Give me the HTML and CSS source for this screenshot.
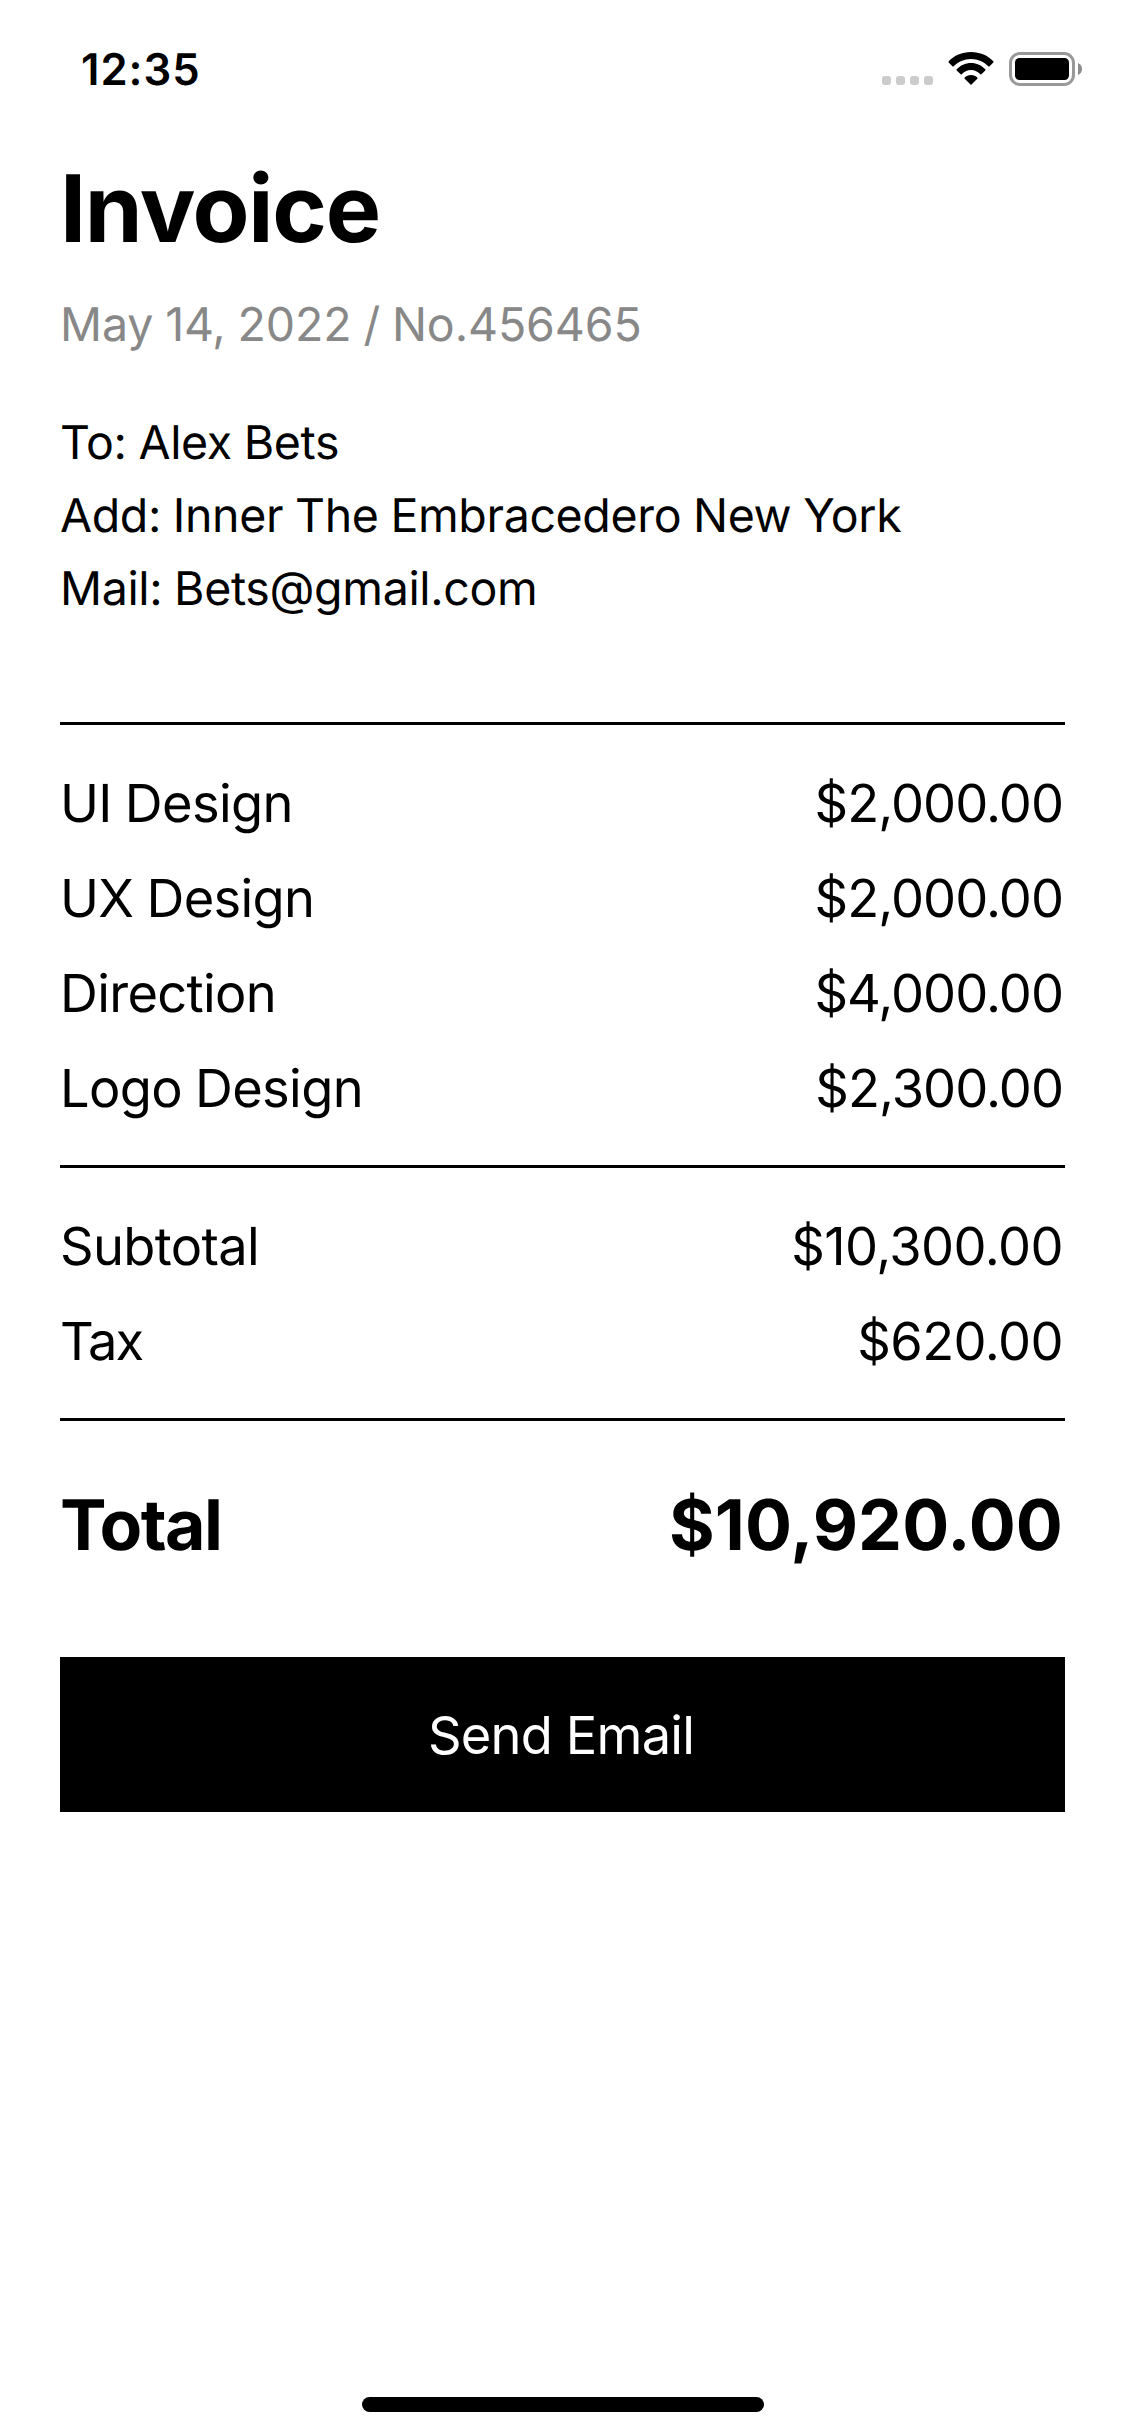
FILE: index.html
```html
<!DOCTYPE html>
<html lang="en">
<head>
<meta charset="utf-8">
<title>Invoice</title>
<link rel="stylesheet" href="styles.css">
</head>
<body>
<div class="screen">
  <header class="status">
    <span class="time">12:35</span>
    <div class="indicators">
      <svg class="dots" width="51" height="9" viewBox="0 0 51 9"><rect width="9" height="9" rx="3"/><rect x="14" width="9" height="9" rx="3"/><rect x="28" width="9" height="9" rx="3"/><rect x="42" width="9" height="9" rx="3"/></svg>
      <svg class="wifi" width="46" height="34" viewBox="0 0 46 34"><path d="M23 0C32 0 40 3.500 45.300 9.300Q45.800 9.900 45.300 10.500L41.300 14.400Q40.800 14.800 40.300 14.300C36 10 30 7 23 7S10 10 5.700 14.300Q5.200 14.800 4.700 14.400L.7 10.500Q.2 9.900 .7 9.300C6 3.500 14 0 23 0Z"/><path d="M23 11C28.700 11 33.600 13.400 37.300 17.300Q37.800 17.900 37.300 18.500L33.300 22.300Q32.800 22.700 32.300 22.300C29.800 19.800 27 18 23 18S16.200 19.800 13.700 22.300Q13.200 22.700 12.700 22.300L8.700 18.500Q8.200 17.900 8.700 17.300C12.400 13.400 17.300 11 23 11Z"/><path d="M23 23C25.600 23 27.800 24 29.300 25.500Q29.900 26.100 29.300 26.700L23.500 32.500Q23 33 22.500 32.500L16.700 26.700Q16.100 26.100 16.700 25.500C18.200 24 20.400 23 23 23Z"/></svg>
      <svg class="battery" width="73" height="34" viewBox="0 0 73 34"><rect x="1.500" y="1.500" width="63" height="31" rx="9.500" fill="none" stroke="#999" stroke-width="3"/><rect x="6" y="6" width="54" height="22" rx="4.500"/><path d="M69 11C71.500 12 73 14.300 73 17S71.500 22 69 23Z" fill="#8c8c8c"/></svg>
    </div>
  </header>
  <main class="invoice">
    <h1 class="title">Invoice</h1>
    <p class="meta">May 14, 2022 / No.456465</p>
    <address class="recipient">
      <p class="line">To: Alex Bets</p>
      <p class="line">Add: Inner The Embracedero New York</p>
      <p class="line">Mail: Bets@gmail.com</p>
    </address>
    <section class="group">
      <div class="row"><span>UI Design</span><span class="amount">$2,000.00</span></div>
      <div class="row"><span>UX Design</span><span class="amount">$2,000.00</span></div>
      <div class="row"><span>Direction</span><span class="amount">$4,000.00</span></div>
      <div class="row"><span>Logo Design</span><span class="amount">$2,300.00</span></div>
    </section>
    <section class="group summary">
      <div class="row"><span>Subtotal</span><span class="amount">$10,300.00</span></div>
      <div class="row"><span class="tax">Tax</span><span class="amount">$620.00</span></div>
    </section>
    <section class="group total">
      <div class="row"><span>Total</span><span class="amount">$10,920.00</span></div>
    </section>
    <button class="send" type="button">Send Email</button>
  </main>
  <div class="home"></div>
</div>
</body>
</html>
```
FILE: styles.css
```css
* { box-sizing: border-box; margin: 0; padding: 0; }
body { background: #fff; color: #000; font-family: Inter, sans-serif; text-rendering: geometricPrecision; }
.screen { width: 1125px; height: 2436px; display: flex; flex-direction: column; }
.status { height: 138px; padding: 0 43px 0 81px; display: flex; justify-content: space-between; align-items: center; }
.time { font-size: 43.6px; font-weight: 600; letter-spacing: 1px; }
.indicators { display: flex; align-items: center; gap: 15px; }
.indicators svg { display: block; }
.dots { align-self: flex-end; margin-bottom: 1px; fill: #ccc; }
.invoice { flex: 1; padding: 21px 60px 0; display: flex; flex-direction: column; }
.title { font-size: 93px; line-height: 100px; font-weight: 700; letter-spacing: -1.3px; }
.meta { margin-top: 36px; font-size: 46.5px; line-height: 60px; letter-spacing: -0.1px; word-spacing: -1.1px; color: #888; }
.recipient { margin-top: 52px; font-style: normal; }
.line { font-size: 46.5px; line-height: 73px; height: 73px; letter-spacing: -0.35px; word-spacing: -0.9px; }
.group { border-top: 3px solid #000; padding: 30px 0; }
.recipient + .group { margin-top: 96px; }
.row { display: flex; justify-content: space-between; align-items: center; height: 95px; font-size: 52.4px; letter-spacing: -0.65px; word-spacing: -1px; }
.amount { padding-right: 2px; letter-spacing: -0.95px; }
.summary .amount { letter-spacing: -0.55px; }
.tax { letter-spacing: -2px; }
.total { padding: 56px 0 85px; }
.total .row { font-size: 69.8px; font-weight: 700; letter-spacing: -1.6px; }
.total .amount { letter-spacing: 0.1px; }
.send { height: 155px; padding-right: 3px; border: 0; background: #000; color: #fff; font: 52.4px Inter, sans-serif; letter-spacing: -0.8px; }
.home { align-self: center; width: 402px; height: 15px; margin-bottom: 24px; border-radius: 8px; background: #000; }
```
